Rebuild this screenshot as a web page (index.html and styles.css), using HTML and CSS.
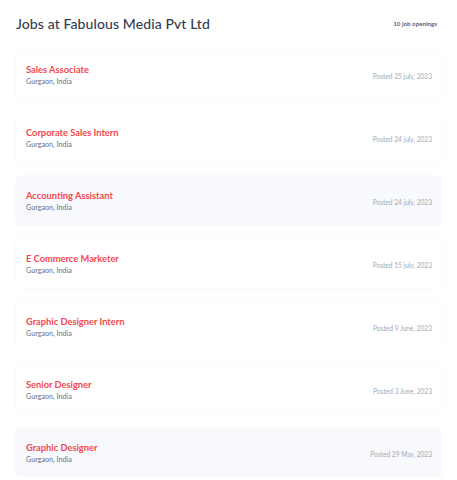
FILE: index.html
```html
<!DOCTYPE html>
<html>
<head>
<meta charset="utf-8">
<link rel="stylesheet" href="styles.css">
</head>
<body>
<div class="page">
  <div class="header">
    <h1 class="title">Jobs at Fabulous Media Pvt Ltd</h1>
    <span class="count">10 job openings</span>
  </div>
  <div class="list">
    <div class="card">
      <div class="info"><div class="role">Sales Associate</div><div class="loc">Gurgaon, India</div></div>
      <div class="date">Posted 25 july, 2023</div>
    </div>
    <div class="card">
      <div class="info"><div class="role">Corporate Sales Intern</div><div class="loc">Gurgaon, India</div></div>
      <div class="date">Posted 24 july, 2023</div>
    </div>
    <div class="card tint">
      <div class="info"><div class="role">Accounting Assistant</div><div class="loc">Gurgaon, India</div></div>
      <div class="date">Posted 24 july, 2023</div>
    </div>
    <div class="card">
      <div class="info"><div class="role">E Commerce Marketer</div><div class="loc">Gurgaon, India</div></div>
      <div class="date">Posted 15 july, 2023</div>
    </div>
    <div class="card">
      <div class="info"><div class="role">Graphic Designer Intern</div><div class="loc">Gurgaon, India</div></div>
      <div class="date">Posted 9 June, 2023</div>
    </div>
    <div class="card">
      <div class="info"><div class="role">Senior Designer</div><div class="loc">Gurgaon, India</div></div>
      <div class="date">Posted 3 June, 2023</div>
    </div>
    <div class="card tint">
      <div class="info"><div class="role">Graphic Designer</div><div class="loc">Gurgaon, India</div></div>
      <div class="date">Posted 29 May, 2023</div>
    </div>
  </div>
</div>
</body>
</html>
```
FILE: styles.css
```css
* { box-sizing: border-box; }
body {
  margin: 0;
  background: #ffffff;
  font-family: Lato, "Noto Sans", sans-serif;
}
.page {
  padding: 0 16px;
}
.header {
  height: 50px;
  display: flex;
  align-items: center;
  justify-content: space-between;
  padding: 0 4px 4px 0;
}
.title {
  margin: 0;
  font-size: 14px;
  font-weight: 500;
  color: #343d52;
  letter-spacing: 0.1px;
}
.count {
  font-size: 6.2px;
  font-weight: 700;
  color: #5b6272;
}
.list {
  display: flex;
  flex-direction: column;
  gap: 14px;
}
.card {
  height: 49px;
  display: flex;
  align-items: center;
  justify-content: space-between;
  padding: 0 9px 0 10px;
  background: #ffffff;
  border-radius: 3px;
  box-shadow: 0 0 3px rgba(30, 40, 70, 0.05);
}
.card.tint {
  background: #f7f9fc;
}
.info {
  display: flex;
  flex-direction: column;
  gap: 1px;
  padding-top: 1px;
}
.role {
  font-size: 9.3px;
  line-height: 12px;
  font-weight: 700;
  color: #f4474e;
}
.loc {
  font-size: 7.2px;
  line-height: 9px;
  color: #6b7080;
}
.date {
  font-size: 6.6px;
  color: #a4a9b3;
  padding-top: 2px;
}
```
